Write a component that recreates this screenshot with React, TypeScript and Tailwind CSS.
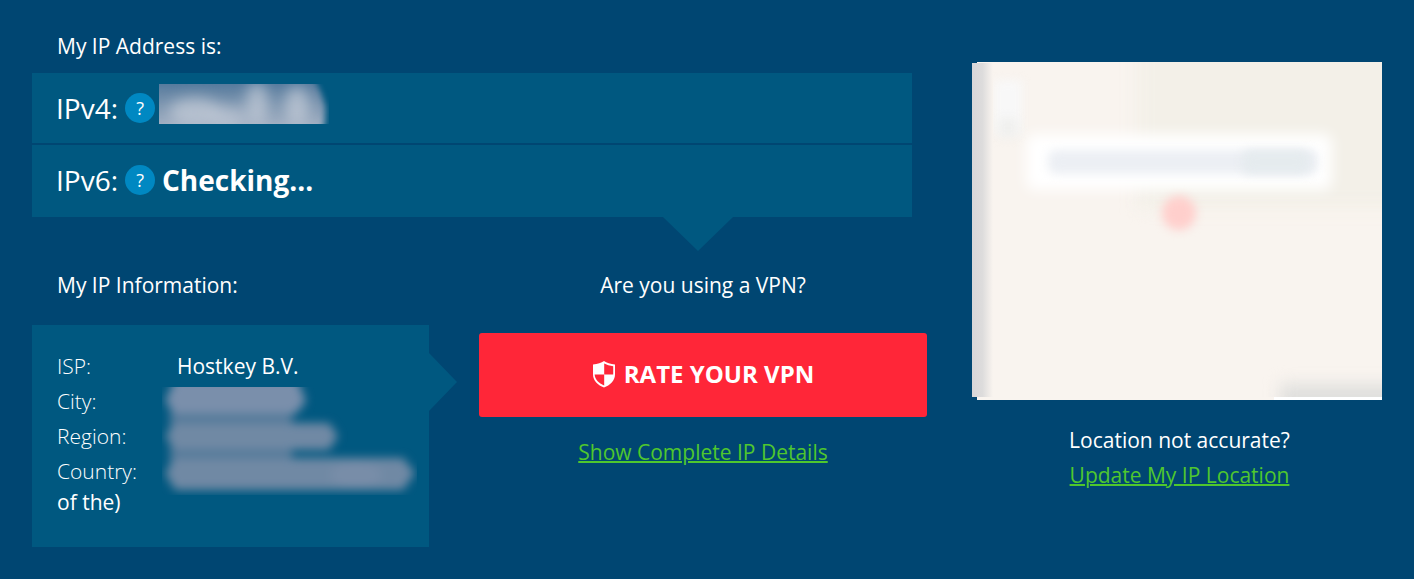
import React from 'react';

interface AddressRowProps {
  label: string;
  className?: string;
  children: React.ReactNode;
}

const AddressRow: React.FC<AddressRowProps> = ({ label, className = '', children }) => (
  <div className={`flex items-center bg-[#005880] px-6 ${className}`}>
    <span className="text-[28px] leading-10">{label}</span>
    <button
      type="button"
      aria-label={`What is ${label}`}
      className="ml-[7px] flex size-[30px] items-center justify-center rounded-full bg-[#0088c2] text-lg"
    >
      ?
    </button>
    {children}
  </div>
);

const ShieldIcon = () => (
  <svg width="24" height="28" viewBox="0 0 24 28" aria-hidden="true">
    <path d="M12 1Q16 3.6 23 4.6V14.5C23 20.5 18 25.5 12 27.5C6 25.5 1 20.5 1 14.5V4.6Q8 3.6 12 1Z" fill="#fff" />
    <path d="M12.2 3.4Q16 5.4 21.2 6.2V14.4H12.2Z" fill="#ff2638" />
    <path d="M2.6 14.4H12.2V25.4C6.6 23.2 3 19.4 2.6 14.4Z" fill="#ff2638" />
  </svg>
);

// Hidden address value
const MaskedAddress = () => (
  <svg className="mb-2 ml-1" width="170" height="40" viewBox="0 0 170 40" aria-hidden="true">
    <defs>
      <filter id="addressBlur" x="-100%" y="-100%" width="300%" height="300%" colorInterpolationFilters="sRGB">
        <feGaussianBlur stdDeviation="7" />
      </filter>
      <filter id="addressEdge" x="-20%" y="-50%" width="140%" height="200%" colorInterpolationFilters="sRGB">
        <feGaussianBlur stdDeviation="3 1" />
      </filter>
      <linearGradient id="addressFill" x1="0" y1="0" x2="0" y2="1">
        <stop offset="0" stopColor="#4f769a" />
        <stop offset="0.5" stopColor="#7f97b1" />
        <stop offset="1" stopColor="#aab6c7" />
      </linearGradient>
      <clipPath id="addressClip">
        <rect width="170" height="40" />
      </clipPath>
    </defs>
    <g clipPath="url(#addressClip)">
      <path d="M-30 -4H156Q163 8 166 22Q167 34 164 46H-30Z" fill="url(#addressFill)" filter="url(#addressEdge)" />
      <g filter="url(#addressBlur)" fill="#c6cdd9">
        <ellipse cx="36" cy="28" rx="26" ry="14" opacity="0.7" />
        <ellipse cx="68" cy="34" rx="18" ry="12" opacity="0.6" />
        <ellipse cx="98" cy="20" rx="11" ry="22" opacity="0.7" />
        <ellipse cx="138" cy="22" rx="12" ry="20" opacity="0.7" />
      </g>
    </g>
  </svg>
);

// Hidden city, region and country values
const MaskedDetails = () => (
  <svg width="256" height="110" viewBox="0 0 256 110" aria-hidden="true">
    <defs>
      <filter id="detailBlur" x="-20%" y="-50%" width="140%" height="200%" colorInterpolationFilters="sRGB">
        <feGaussianBlur stdDeviation="5" />
      </filter>
      <clipPath id="detailClip">
        <rect x="1" width="255" height="108" />
      </clipPath>
    </defs>
    <g clipPath="url(#detailClip)">
      <g filter="url(#detailBlur)" fill="#7089a4">
        <rect x="9" y="10" width="122" height="80" fill="#527999" />
        <path d="M14 -8H136L145 14L135 27H14L4 14Z" fill="#7a8fab" />
        <path d="M14 36H168L177 49L168 63H14L4 49Z" />
        <path d="M14 71H242L254 86L242 103H14L4 86Z" />
        <ellipse cx="195" cy="88" rx="26" ry="13" fill="#788da8" />
      </g>
    </g>
  </svg>
);

const LocationMap = () => (
  <div className="relative h-[338px] bg-[#f9f4ef]">
    <svg
      className="absolute top-0 right-0 h-full w-[410px]"
      viewBox="0 0 410 338"
      role="img"
      aria-label="Map of your location"
    >
      <defs>
        <filter id="mapBlur" x="-30%" y="-100%" width="160%" height="300%" colorInterpolationFilters="sRGB">
          <feGaussianBlur stdDeviation="8" />
        </filter>
        <filter id="mapSoft" x="-100%" y="-100%" width="300%" height="300%" colorInterpolationFilters="sRGB">
          <feGaussianBlur stdDeviation="7" />
        </filter>
        <filter id="pinBlur" x="-50%" y="-50%" width="200%" height="200%" colorInterpolationFilters="sRGB">
          <feGaussianBlur stdDeviation="5" />
        </filter>
        <linearGradient id="mapEdge">
          <stop offset="0" stopColor="#d7d6d8" />
          <stop offset="0.5" stopColor="#dddcdc" />
          <stop offset="1" stopColor="#f9f4ef" />
        </linearGradient>
        <clipPath id="mapClip">
          <rect x="5" width="405" height="335" />
        </clipPath>
      </defs>
      <g clipPath="url(#mapClip)">
        <rect x="165" y="-20" width="280" height="166" fill="#f3f0e8" filter="url(#mapBlur)" />
        <rect x="22" y="18" width="28" height="54" rx="4" fill="#f8f8f8" filter="url(#pinBlur)" />
        <rect x="26" y="56" width="20" height="20" rx="4" fill="#f0f0ee" filter="url(#pinBlur)" />
        <rect x="54" y="72" width="306" height="56" rx="8" fill="#ffffff" filter="url(#mapSoft)" />
        <rect x="76" y="88" width="270" height="24" rx="8" fill="#eceff4" filter="url(#pinBlur)" />
        <rect x="270" y="88" width="68" height="24" rx="8" fill="#e5ebee" filter="url(#pinBlur)" />
        <circle cx="207" cy="151" r="17" fill="#ffcfcc" filter="url(#pinBlur)" />
        <rect x="308" y="322" width="130" height="30" fill="#dfdfdd" filter="url(#mapBlur)" />
      </g>
      <rect y="1" width="21" height="334" fill="url(#mapEdge)" />
      <rect x="302" y="335" width="108" height="3" fill="#fff" />
    </svg>
  </div>
);

const App: React.FC = () => {
  return (
    <div className="flex min-h-screen gap-[50px] bg-[#004672] px-8 pt-8 pb-8 font-['Open_Sans',sans-serif] text-[21px] leading-7 text-white">
      <main className="min-w-0 flex-1">
        <h1 className="pl-[25px]">My IP Address is:</h1>

        <section className="relative mt-[13px] mr-[15px]">
          <AddressRow label="IPv4:" className="h-[70px]">
            <MaskedAddress />
          </AddressRow>
          <AddressRow label="IPv6:" className="mt-0.5 h-[72px] pb-0.5">
            <strong className="ml-[7px] text-[28px] font-bold">Checking...</strong>
          </AddressRow>
          <svg
            className="absolute top-full right-[179px]"
            width="70"
            height="34"
            viewBox="0 0 70 34"
            aria-hidden="true"
          >
            <path d="M0 0H70L35 34Z" fill="#005880" />
          </svg>
        </section>

        <div className="mt-[54px] grid grid-cols-[minmax(0,397fr)_minmax(0,448fr)] gap-[50px]">
          <section>
            <h2 className="pl-[25px]">My IP Information:</h2>
            <div className="relative mt-[26px] h-[222px] bg-[#005880] px-[25px] pt-6">
              <dl className="grid grid-cols-[120px_minmax(0,1fr)] grid-rows-[35px_35px_35px_35px] leading-[35px]">
                <dt className="font-light">ISP:</dt>
                <dd className="font-medium">Hostkey B.V.</dd>
                <dt className="font-light">City:</dt>
                <dd className="row-span-3 -ml-4 pt-[3px]">
                  <MaskedDetails />
                </dd>
                <dt className="font-light">Region:</dt>
                <dt className="font-light">Country:</dt>
                <dd className="col-span-2 -mt-1 font-medium">of the)</dd>
              </dl>
              <svg
                className="absolute top-7 left-full"
                width="28"
                height="58"
                viewBox="0 0 28 58"
                aria-hidden="true"
              >
                <path d="M0 0L28 29L0 58Z" fill="#005880" />
              </svg>
            </div>
          </section>

          <section className="text-center">
            <h2>Are you using a VPN?</h2>
            <button
              type="button"
              className="mt-[34px] flex h-[84px] w-full items-center justify-center gap-2 rounded-[3px] bg-[#ff2638] pb-0.5 text-2xl font-bold"
            >
              <ShieldIcon />
              RATE YOUR VPN
            </button>
            <a
              href="#details"
              className="mt-[21px] inline-block text-[#4fc72e] underline decoration-2"
            >
              Show Complete IP Details
            </a>
          </section>
        </div>
      </main>

      <aside className="w-[405px] pt-[30px] text-center">
        <LocationMap />
        <p className="mt-[23px] leading-[35px]">
          Location not accurate?
          <br />
          <a href="#update" className="text-[#4fc72e] underline decoration-2">
            Update My IP Location
          </a>
        </p>
      </aside>
    </div>
  );
};

export default App;
